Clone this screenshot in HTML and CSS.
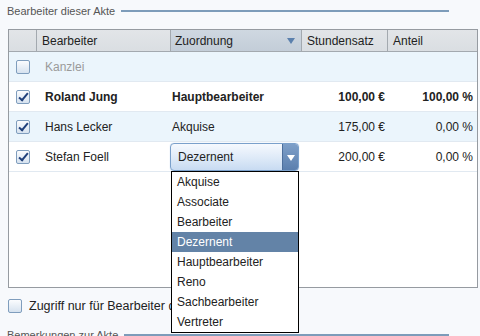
FILE: index.html
```html
<!DOCTYPE html>
<html lang="de">

<head>
    <meta charset="UTF-8">
    <title>Bearbeiter dieser Akte</title>
    <link rel="stylesheet" href="styles.css">
</head>

<body>
    <div class="legend">
        <span class="legend-text">Bearbeiter dieser Akte</span>
        <span class="legend-line"></span>
    </div>

    <div class="grid">
        <!-- Header -->
        <div class="head"></div>
        <div class="head">Bearbeiter</div>
        <div class="head sorted">Zuordnung <span class="sort-arrow"></span></div>
        <div class="head">Stundensatz</div>
        <div class="head last">Anteil</div>

        <!-- Rows -->
        <div class="cell alt"><span class="check"></span></div>
        <div class="cell alt name muted">Kanzlei</div>
        <div class="cell alt role"></div>
        <div class="cell alt num"></div>
        <div class="cell alt num"></div>

        <div class="cell"><span class="check on"></span></div>
        <div class="cell name bold">Roland Jung</div>
        <div class="cell role bold">Hauptbearbeiter</div>
        <div class="cell num bold">100,00 €</div>
        <div class="cell num pct bold">100,00 %</div>

        <div class="cell alt"><span class="check on"></span></div>
        <div class="cell alt name">Hans Lecker</div>
        <div class="cell alt role">Akquise</div>
        <div class="cell alt num">175,00 €</div>
        <div class="cell alt num pct">0,00 %</div>

        <div class="cell"><span class="check on"></span></div>
        <div class="cell name">Stefan Foell</div>
        <div class="cell role">
            <div class="combo">
                <span class="combo-text">Dezernent</span>
                <span class="combo-btn"></span>
            </div>
        </div>
        <div class="cell num">200,00 €</div>
        <div class="cell num pct">0,00 %</div>
    </div>

    <div class="option-row">
        <span class="check"></span>
        <span>Zugriff nur für Bearbeiter dieser Akte</span>
    </div>

    <div class="legend">
        <span class="legend-text">Bemerkungen zur Akte</span>
        <span class="legend-line"></span>
    </div>

    <!-- open list of the combo box -->
    <ul class="popup">
        <li>Akquise</li>
        <li>Associate</li>
        <li>Bearbeiter</li>
        <li class="selected">Dezernent</li>
        <li>Hauptbearbeiter</li>
        <li>Reno</li>
        <li>Sachbearbeiter</li>
        <li>Vertreter</li>
    </ul>
</body>

</html>
```

FILE: styles.css
```css
body {
    font-family: "Liberation Sans", Arial, sans-serif;
    font-size: 12px;
    color: #222;
    background-color: #f7f9fc;
    margin: 0;
    padding: 0;
    position: relative;
    height: 336px;
    overflow: hidden;
}

.legend {
    display: flex;
    align-items: center;
    height: 22px;
    width: 442px;
    margin-left: 7px;
}

.legend-text {
    font-size: 11px;
    color: #555;
}

.legend-line {
    flex: 1;
    height: 2px;
    margin-left: 6px;
    background-color: #7d9cba;
}

.grid {
    display: grid;
    grid-template-columns: 28px 134px 131px 86px 1fr;
    grid-template-rows: 22px 30px 30px 30px 30px;
    width: 470px;
    height: 259px;
    box-sizing: border-box;
    margin: 7px 0 0 8px;
    border: 1px solid #969ba1;
    background-color: #fff;
    align-content: start;
}

.head {
    display: flex;
    align-items: center;
    padding-left: 5px;
    box-sizing: border-box;
    background: linear-gradient(#e2e5e8, #dadee2);
    border-right: 1px solid #a3a9af;
    border-bottom: 1px solid #a3a9af;
}

.head.last {
    border-right: none;
}

.head.sorted {
    justify-content: space-between;
    padding-left: 4px;
    padding-right: 6px;
    background: linear-gradient(#cfd8e1, #c3cdd8);
}

.sort-arrow {
    width: 0;
    height: 0;
    border-left: 4px solid transparent;
    border-right: 4px solid transparent;
    border-top: 6px solid #5b80ad;
}

.cell {
    display: flex;
    align-items: center;
    box-sizing: border-box;
    border-bottom: 1px solid #e1e9f1;
    background-color: #fff;
}

.cell.alt {
    background-color: #ebf5fc;
}

.cell .check {
    margin-left: 7px;
}

.name {
    padding-left: 8px;
}

.role {
    padding-left: 1px;
}

.num {
    justify-content: flex-end;
    padding-right: 3px;
}

.num.pct {
    padding-right: 4px;
}

.muted {
    color: #9a9a9a;
}

.bold {
    font-weight: bold;
}

.check {
    display: inline-block;
    width: 14px;
    height: 14px;
    box-sizing: border-box;
    border: 1px solid #7f9dbd;
    border-radius: 2px;
    background: linear-gradient(#fbfcfe, #d6e2ef);
    position: relative;
}

.check.on::after {
    content: "";
    position: absolute;
    left: 4px;
    top: 0px;
    width: 3px;
    height: 8px;
    border-right: 2px solid #1f3f7a;
    border-bottom: 2px solid #1f3f7a;
    transform: rotate(40deg);
}

.combo {
    display: flex;
    align-items: center;
    width: 129px;
    height: 28px;
    margin-left: -2px;
    margin-top: 1px;
    box-sizing: border-box;
    border: 1px solid #7aa0cb;
    border-radius: 4px;
    background: linear-gradient(#f6f9fe, #dbe8f7 60%, #c8dbf2);
    box-shadow: 0 0 1px #9fc0e6;
    overflow: hidden;
}

.combo-text {
    flex: 1;
    padding-left: 7px;
}

.combo-btn {
    width: 15px;
    height: 100%;
    position: relative;
    background: linear-gradient(#7e9fc8, #5b7fae);
    border-left: 1px solid #4d6f9c;
}

.combo-btn::after {
    content: "";
    position: absolute;
    left: 4px;
    top: 11px;
    border-left: 4px solid transparent;
    border-right: 4px solid transparent;
    border-top: 6px solid #fff;
}

.option-row {
    display: flex;
    align-items: center;
    gap: 7px;
    height: 16px;
    margin: 10px 0 0 8px;
    font-size: 12.5px;
}

.option-row + .legend {
    margin-top: 10px;
}

.popup {
    position: absolute;
    left: 171px;
    top: 171px;
    width: 128px;
    height: 162px;
    box-sizing: border-box;
    margin: 0;
    padding: 0;
    list-style: none;
    border: 1px solid #000;
    background-color: #fff;
}

.popup li {
    height: 20px;
    line-height: 20px;
    padding-left: 5px;
}

.popup li.selected {
    background-color: #6383a7;
    color: #fff;
}
```
